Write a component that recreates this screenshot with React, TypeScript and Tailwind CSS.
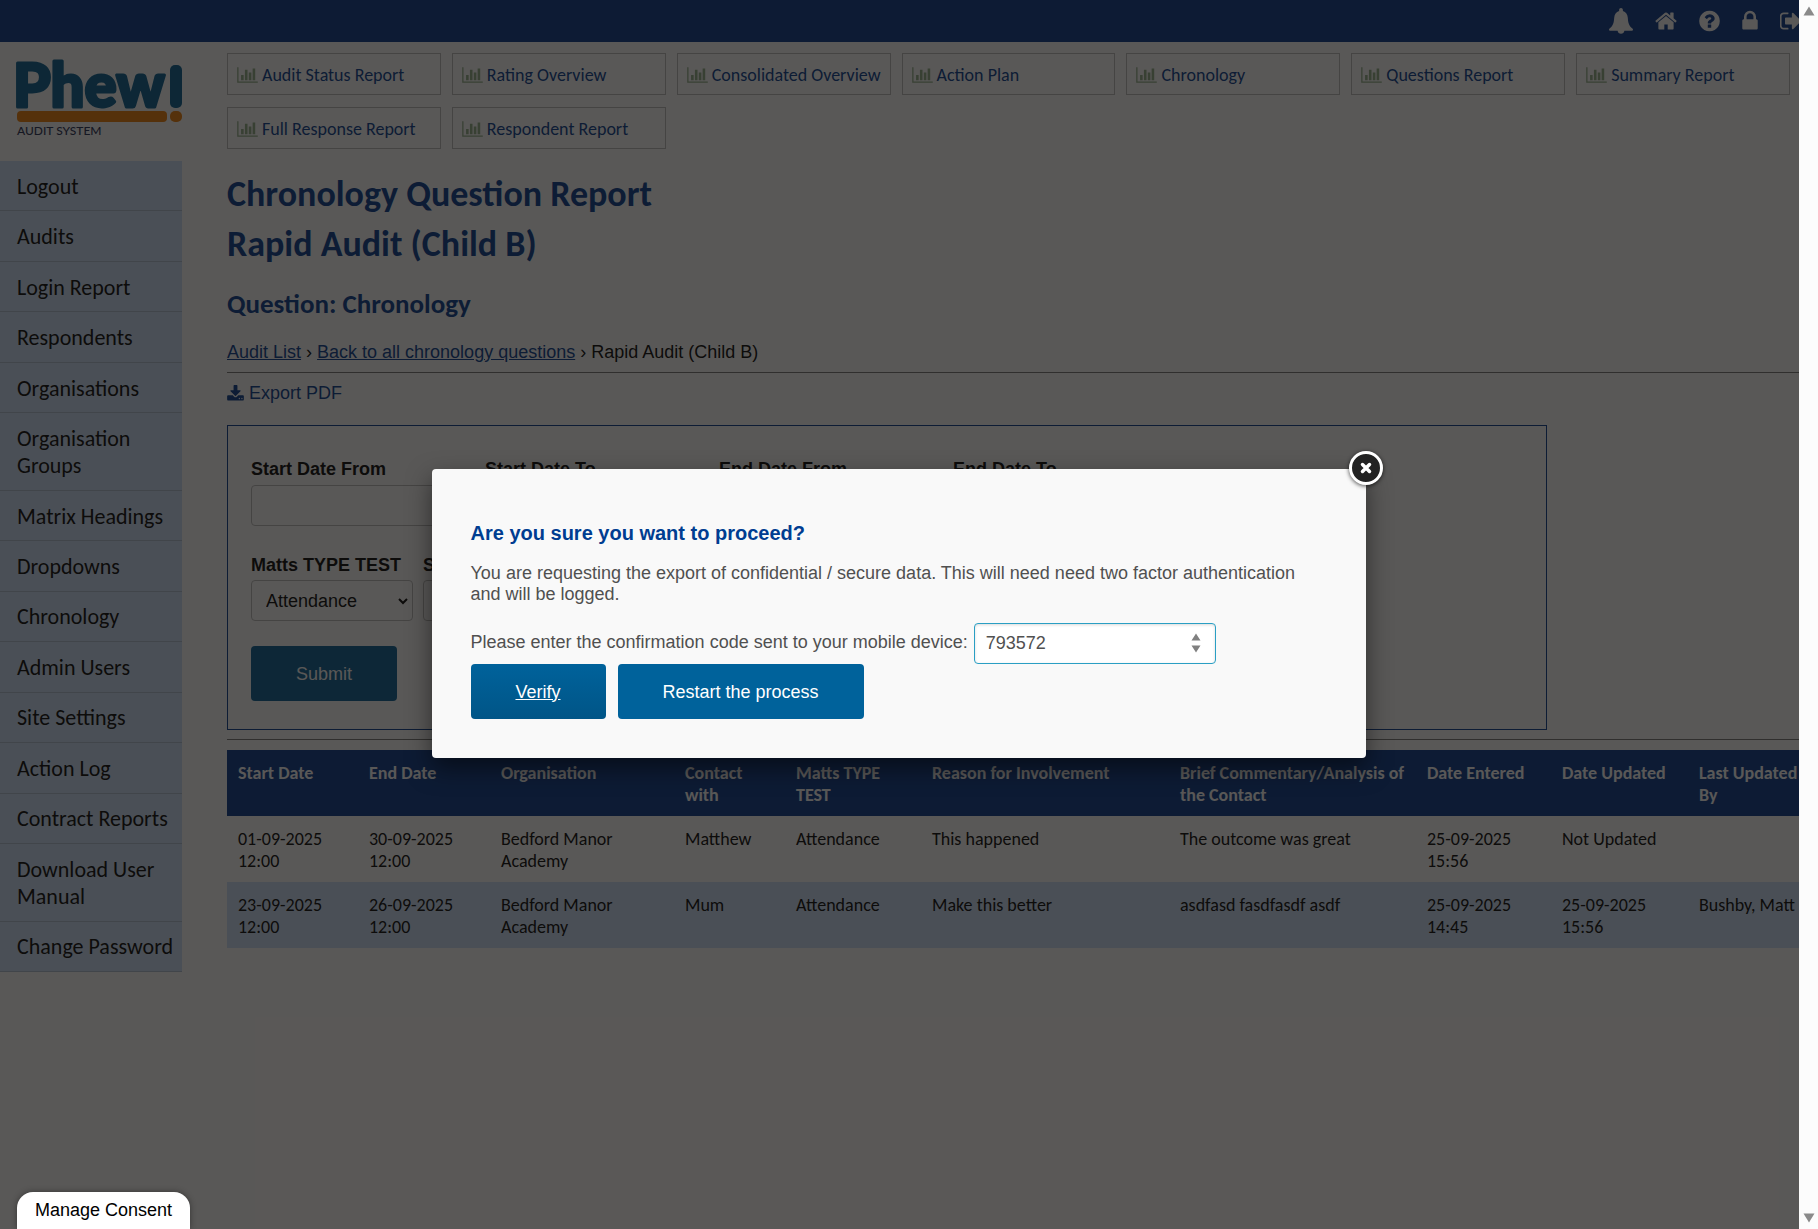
const BODY_FONT = "font-['Liberation_Sans',Arial,sans-serif]";
const HEADING_FONT = "font-['Carlito','Lato',sans-serif]";

const menu = [
	'Logout',
	'Audits',
	'Login Report',
	'Respondents',
	'Organisations',
	'Organisation Groups',
	'Matrix Headings',
	'Dropdowns',
	'Chronology',
	'Admin Users',
	'Site Settings',
	'Action Log',
	'Contract Reports',
	'Download User Manual',
	'Change Password',
];

const reports = [
	'Audit Status Report',
	'Rating Overview',
	'Consolidated Overview',
	'Action Plan',
	'Chronology',
	'Questions Report',
	'Summary Report',
	'Full Response Report',
	'Respondent Report',
];

const dateFilters = [
	{ id: 'start-from', label: 'Start Date From' },
	{ id: 'start-to', label: 'Start Date To' },
	{ id: 'end-from', label: 'End Date From' },
	{ id: 'end-to', label: 'End Date To' },
];

const columns = [
	{ label: 'Start Date', width: 'w-[131px]' },
	{ label: 'End Date', width: 'w-[132px]' },
	{ label: 'Organisation', width: 'w-[184px]' },
	{ label: 'Contact with', width: 'w-[111px]' },
	{ label: 'Matts TYPE TEST', width: 'w-[136px]' },
	{ label: 'Reason for Involvement', width: 'w-[248px]' },
	{ label: 'Brief Commentary/Analysis of the Contact', width: 'w-[247px]' },
	{ label: 'Date Entered', width: 'w-[135px]' },
	{ label: 'Date Updated', width: 'w-[137px]' },
	{ label: 'Last Updated By', width: 'w-[131px]' },
];

const rows = [
	['01-09-2025 12:00', '30-09-2025 12:00', 'Bedford Manor Academy', 'Matthew', 'Attendance', 'This happened', 'The outcome was great', '25-09-2025 15:56', 'Not Updated', ''],
	['23-09-2025 12:00', '26-09-2025 12:00', 'Bedford Manor Academy', 'Mum', 'Attendance', 'Make this better', 'asdfasd fasdfasdf asdf', '25-09-2025 14:45', '25-09-2025 15:56', 'Bushby, Matt'],
];

const topIcons = [
	{
		label: 'Notifications',
		className: 'w-6 h-[26px]',
		viewBox: '0 0 24 26',
		path: 'M12 0c1.1 0 1.9.9 1.9 2v1c3 .9 4.7 3.500 4.900 6.800.3 5 1.200 8.200 4.600 10.600.4.3.6.7.6 1.100 0 .8-.6 1.300-1.400 1.300h-7.200c-.3 1.700-1.600 3-3.400 3s-3.100-1.300-3.400-3H1.400C.6 22.800 0 22.300 0 21.500c0-.4.2-.8.6-1.100C4 18 4.900 14.800 5.200 9.800 5.400 6.500 7.100 3.900 10.100 3V2c0-1.100.8-2 1.900-2z',
	},
	{
		label: 'Home',
		className: 'w-[22px] h-6',
		viewBox: '64 0 1664 1792',
		path: 'M1472 992v480q0 26-19 45t-45 19h-384v-384h-256v384h-384q-26 0-45-19t-19-45v-480q0-1 .5-3t.5-3l575-474 575 474q1 2 1 6zm223-69l-62 74q-8 9-21 11h-3q-13 0-21-7l-692-577-692 577q-12 8-24 7-13-2-21-11l-62-74q-8-10-7-23.500t11-21.500l719-599q32-26 76-26t76 26l244 204v-195q0-14 9-23t23-9h192q14 0 23 9t9 23v408l219 182q10 8 11 21.500t-7 23.500z',
	},
	{
		label: 'Help',
		className: 'w-[21px] h-6',
		viewBox: '128 0 1536 1792',
		path: 'M1024 1376v-192q0-14-9-23t-23-9h-192q-14 0-23 9t-9 23v192q0 14 9 23t23 9h192q14 0 23-9t9-23zm256-672q0-88-55.500-163t-138.500-116-170-41q-243 0-371 213-15 24 8 42l132 100q7 6 19 6 16 0 25-12 53-68 86-92 34-24 86-24 48 0 85.500 26t37.500 59q0 38-20 61t-68 45q-63 28-115.500 86.500t-52.500 125.500v36q0 14 9 23t23 9h192q14 0 23-9t9-23q0-19 21.500-49.500t54.500-49.500q32-18 49-28.500t46-35 44.500-48 28-60.500 12.500-81zm384 192q0 209-103 385.500t-279.500 279.500-385.500 103-385.500-103-279.500-279.500-103-385.500 103-385.500 279.500-279.500 385.500-103 385.500 103 279.500 279.500 103 385.500z',
	},
	{
		label: 'Change password',
		className: 'w-4 h-6',
		viewBox: '320 0 1152 1792',
		path: 'M640 768h512v-192q0-106-75-181t-181-75-181 75-75 181v192zm832 96v576q0 40-28 68t-68 28h-960q-40 0-68-28t-28-68v-576q0-40 28-68t68-28h32v-192q0-184 132-316t316-132 316 132 132 316v192h32q40 0 68 28t28 68z',
	},
	{
		label: 'Log out',
		className: 'w-[22px] h-6',
		viewBox: '96 0 1600 1792',
		path: 'M704 1440q0 4 1 20t.5 26.500-3 23.500-10 19.500-20.500 6.500h-320q-119 0-203.500-84.500t-84.500-203.500v-704q0-119 84.500-203.500t203.500-84.500h320q13 0 22.500 9.500t9.500 22.500q0 4 1 20t.5 26.500-3 23.500-10 19.500-20.500 6.500h-320q-66 0-113 47t-47 113v704q0 66 47 113t113 47h312l11.500 1 11.500 3 8 5.500 7 9 2 13.500zm928-544q0 26-19 45l-544 544q-19 19-45 19t-45-19-19-45v-288h-448q-26 0-45-19t-19-45v-384q0-26 19-45t45-19h448v-288q0-26 19-45t45-19 45 19l544 544q19 19 19 45z',
	},
];

function ChartIcon() {
	return (
		<svg className="w-[21px] h-[18px] shrink-0 text-[#90ad88]" fill="currentColor" viewBox="0 0 2048 1792" aria-hidden="true">
			<path d="M640 896v512h-256v-512h256zm384-512v1024h-256v-1024h256zm1024 1152v128h-2048v-1536h128v1408h1920zm-640-896v768h-256v-768h256zm384-384v1152h-256v-1152h256z" />
		</svg>
	);
}

function DownloadIcon() {
	return (
		<svg className="w-[17px] h-[18px]" fill="currentColor" viewBox="64 0 1664 1792" aria-hidden="true">
			<path d="M1344 1344q0-26-19-45t-45-19-45 19-19 45 19 45 45 19 45-19 19-45zm256 0q0-26-19-45t-45-19-45 19-19 45 19 45 45 19 45-19 19-45zm128-224v320q0 40-28 68t-68 28h-1472q-40 0-68-28t-28-68v-320q0-40 28-68t68-28h465l135 136q58 56 136 56t136-56l136-136h464q40 0 68 28t28 68zm-325-569q17 41-14 70l-448 448q-18 19-45 19t-45-19l-448-448q-31-29-14-70 17-39 59-39h256v-448q0-26 19-45t45-19h256q26 0 45 19t19 45v448h256q42 0 59 39z" />
		</svg>
	);
}

function Logo() {
	return (
		<svg className="w-[166px] h-[74px] overflow-visible" viewBox="0 0 166 74" role="img" aria-label="Phew! Audit System">
			<text x="-4" y="42" fontFamily="Lato" fontWeight="900" fontSize="60" fill="#005c90" stroke="#005c90" strokeWidth="3" strokeLinejoin="round">Phew</text>
			<rect x="153" y="0" width="12" height="43" rx="5" fill="#005c90" />
			<rect x="0" y="46" width="150" height="11" rx="4" fill="#f07c00" />
			<rect x="153" y="46" width="12" height="11" rx="5" fill="#f07c00" />
			<text x="0" y="70" fontFamily="Lato" fontWeight="500" fontSize="12" fill="#1d2b50">AUDIT SYSTEM</text>
		</svg>
	);
}

function FilterSelect({ id, label, option }: { id: string; label: string; option: string }) {
	return (
		<div>
			<label htmlFor={id} className="block font-bold leading-[27px]">{label}</label>
			<div className="relative mt-px">
				<select id={id} className="w-[162px] h-[41px] pl-[14px] appearance-none rounded border border-[#bbb] bg-transparent">
					<option>{option}</option>
				</select>
				<svg className="absolute right-1 top-4 w-3 h-3 pointer-events-none" viewBox="0 0 12 12" fill="none" stroke="currentColor" strokeWidth="2">
					<path d="M2 3l4 4 4-4" />
				</svg>
			</div>
		</div>
	);
}

function Sidebar() {
	return (
		<aside className={`w-[182px] shrink-0 text-[22px] ${HEADING_FONT}`}>
			<div className="h-[119px] pt-[23px] pl-[17px]">
				<Logo />
			</div>
			<nav className="flex flex-col h-[811px] bg-[#cee0fa]">
				{menu.map((item) => (
					<a key={item} href="#" className="grow flex items-center pt-px pl-[17px] pr-2 leading-[27px] border-b border-[#adc0d2] text-black">
						{item}
					</a>
				))}
			</nav>
		</aside>
	);
}

function Filters() {
	return (
		<form className="mt-[18px] max-w-[1320px] pt-[30px] px-[23px] pb-7 border border-[#00388c]">
			<div className="flex gap-[10px]">
				{dateFilters.map((f) => (
					<div key={f.id} className="w-56">
						<label htmlFor={f.id} className="block font-bold leading-[27px]">{f.label}</label>
						<input id={f.id} type="text" className="mt-0.5 w-full h-[41px] px-3 rounded border border-[#bbb]" />
					</div>
				))}
			</div>
			<div className="mt-[26px] flex gap-[10px]">
				<FilterSelect id="type" label="Matts TYPE TEST" option="Attendance" />
				<FilterSelect id="status" label="Status" option="All" />
			</div>
			<button type="button" className="mt-[25px] w-[146px] h-[55px] rounded bg-[#005c94] text-white">Submit</button>
		</form>
	);
}

function ResultsTable() {
	return (
		<table className={`mt-[10px] w-[1592px] table-fixed text-left text-lg leading-[22px] ${HEADING_FONT}`}>
			<thead>
				<tr className="bg-[#00348a] text-white">
					{columns.map((c) => (
						<th key={c.label} className={`${c.width} pt-3 pr-[9px] pb-[10px] pl-[11px] align-top font-bold leading-[22px]`}>{c.label}</th>
					))}
				</tr>
			</thead>
			<tbody>
				{rows.map((row) => (
					<tr key={row[0]} className="even:bg-[#cee0fa]">
						{row.map((cell, i) => (
							<td key={i} className="pt-3 pr-[9px] pb-[10px] pl-[11px] align-top">{cell}</td>
						))}
					</tr>
				))}
			</tbody>
		</table>
	);
}

function ConfirmDialog() {
	return (
		<div role="dialog" aria-labelledby="confirm-title" className="relative w-[934px] pt-[49px] px-[39px] pb-[39px] rounded bg-[#f9f9f9] text-[#505050] shadow-[0_10px_25px_rgba(0,0,0,0.5)]">
			<h2 id="confirm-title" className="text-xl leading-[30px] font-bold text-[#003d91]">Are you sure you want to proceed?</h2>
			<p className="mt-[15px] leading-[21px]">
				You are requesting the export of confidential / secure data. This will need need two factor authentication and will be logged.
			</p>
			<div className="mt-[18px] flex items-center gap-[6px]">
				<label htmlFor="code" className="pb-[3px]">Please enter the confirmation code sent to your mobile device:</label>
				<div className="relative">
					<input id="code" type="text" inputMode="numeric" defaultValue="793572" className="block w-[242px] h-[41px] px-[11px] rounded border border-[#2a9fc4] bg-white shadow-[inset_0_1px_3px_rgba(0,0,0,0.15)]" />
					<svg className="absolute right-[15px] top-[10px] w-[10px] h-5" viewBox="0 0 10 20" fill="#808080" aria-hidden="true">
						<path d="M5 0.500L9.500 7.500H0.500zM5 19.500L9.500 12.500H0.500z" />
					</svg>
				</div>
			</div>
			<div className="flex gap-3 text-white">
				<button type="button" className="w-[135px] h-[55px] rounded bg-linear-to-b from-[#00629b] to-[#005587] underline">Verify</button>
				<button type="button" className="w-[246px] h-[55px] rounded bg-[#00629b]">Restart the process</button>
			</div>
			<button type="button" aria-label="Close" className="absolute -top-[18px] -right-[17px] w-[34px] h-[34px] grid place-items-center rounded-full border-[3px] border-white bg-[#222] shadow-[0_1px_4px_rgba(0,0,0,0.7)]">
				<svg className="w-3 h-3" viewBox="0 0 12 12" stroke="white" strokeWidth="3.500" strokeLinecap="round">
					<path d="M2.500 2.500l7 7M9.500 2.500l-7 7" />
				</svg>
			</button>
		</div>
	);
}

export default function App() {
	return (
		<div className={`flex min-h-screen text-lg text-black ${BODY_FONT}`}>
			<div className="relative flex-1 min-w-0 overflow-hidden bg-white">
				{/* Top bar */}
				<header className="flex items-center justify-end gap-[22px] h-[42px] -mr-[3px] bg-[#00348a] text-white">
					{topIcons.map((icon) => (
						<a key={icon.label} href="#" aria-label={icon.label}>
							<svg className={icon.className} fill="currentColor" viewBox={icon.viewBox}>
								<path d={icon.path} />
							</svg>
						</a>
					))}
				</header>

				<div className="flex">
					<Sidebar />

					<main className="flex-1 min-w-0 ml-[45px]">
						<div className={`mt-[11px] mr-[9px] grid grid-cols-7 gap-x-[11px] gap-y-3 text-lg ${HEADING_FONT}`}>
							{reports.map((r) => (
								<a key={r} href="#" className="flex items-center gap-1 h-[42px] pt-px pl-[9px] border border-[#bbb] text-[#00388c] whitespace-nowrap">
									<ChartIcon />
									{r}
								</a>
							))}
						</div>

						<div className={`font-bold text-[#00388c] ${HEADING_FONT}`}>
							<h1 className="mt-5 text-[36px] leading-[50px]">Chronology Question Report</h1>
							<h2 className="text-[36px] leading-[50px]">Rapid Audit (Child B)</h2>
							<h3 className="mt-5 text-[27px] leading-[30px]">Question: Chronology</h3>
						</div>

						<p className="mt-5 leading-[27px]">
							<a href="#" className="text-[#00388c] underline">Audit List</a>
							{' › '}
							<a href="#" className="text-[#00388c] underline">Back to all chronology questions</a>
							{' › Rapid Audit (Child B)'}
						</p>
						<hr className="mt-[6px] border-[#777]" />
						<a href="#" className="mt-[7px] flex items-center gap-[5px] leading-[27px] text-[#00388c]">
							<DownloadIcon />
							Export PDF
						</a>

						<Filters />
						<hr className="mt-[9px] border-[#777]" />
						<ResultsTable />
					</main>
				</div>

				{/* Dimmed backdrop with the dialog on top */}
				<div className="absolute inset-0 flex items-center justify-center pr-0.5 pb-0.5 bg-[#13110f]/70">
					<ConfirmDialog />
				</div>

				<button type="button" className="absolute bottom-0 left-[17px] w-[173px] h-[37px] pb-0.5 rounded-t-2xl bg-white shadow-[0_0_6px_rgba(0,0,0,0.4)]">Manage Consent</button>
			</div>

			{/* Scroll track */}
			<div className="w-[19px] shrink-0 flex flex-col items-center justify-between py-[6px] bg-[#fcfcfc]" aria-hidden="true">
				<svg className="w-3 h-[10px]" viewBox="0 0 12 10" fill="#8a8a8a"><path d="M6 0.500L11.500 9.500H0.500z" /></svg>
				<svg className="w-3 h-[10px]" viewBox="0 0 12 10" fill="#8a8a8a"><path d="M6 9.500L0.500 0.500H11.500z" /></svg>
			</div>
		</div>
	);
}
